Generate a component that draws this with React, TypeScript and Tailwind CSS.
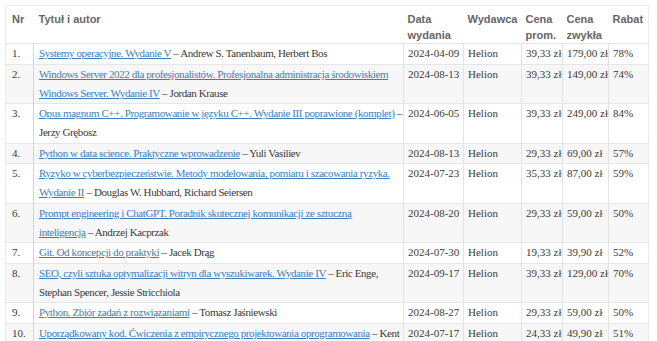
type Book = {
  title: string;
  author: string;
  date: string;
  promo: string;
  regular: string;
  discount: string;
};

const books: Book[] = [
  { title: "Systemy operacyjne. Wydanie V", author: "Andrew S. Tanenbaum, Herbert Bos", date: "2024-04-09", promo: "39,33 zł", regular: "179,00 zł", discount: "78%" },
  { title: "Windows Server 2022 dla profesjonalistów. Profesjonalna administracja środowiskiem Windows Server. Wydanie IV", author: "Jordan Krause", date: "2024-08-13", promo: "39,33 zł", regular: "149,00 zł", discount: "74%" },
  { title: "Opus magnum C++. Programowanie w języku C++. Wydanie III poprawione (komplet)", author: "Jerzy Grębosz", date: "2024-06-05", promo: "39,33 zł", regular: "249,00 zł", discount: "84%" },
  { title: "Python w data science. Praktyczne wprowadzenie", author: "Yuli Vasiliev", date: "2024-08-13", promo: "29,33 zł", regular: "69,00 zł", discount: "57%" },
  { title: "Ryzyko w cyberbezpieczeństwie. Metody modelowania, pomiaru i szacowania ryzyka. Wydanie II", author: "Douglas W. Hubbard, Richard Seiersen", date: "2024-07-23", promo: "35,33 zł", regular: "87,00 zł", discount: "59%" },
  // wraps differently in the original font, so break it by hand
  { title: "Prompt engineering i ChatGPT. Poradnik skutecznej komunikacji ze sztuczną\ninteligencją", author: "Andrzej Kacprzak", date: "2024-08-20", promo: "29,33 zł", regular: "59,00 zł", discount: "50%" },
  { title: "Git. Od koncepcji do praktyki", author: "Jacek Drąg", date: "2024-07-30", promo: "19,33 zł", regular: "39,90 zł", discount: "52%" },
  { title: "SEO, czyli sztuka optymalizacji witryn dla wyszukiwarek. Wydanie IV", author: "Eric Enge, Stephan Spencer, Jessie Stricchiola", date: "2024-09-17", promo: "39,33 zł", regular: "129,00 zł", discount: "70%" },
  { title: "Python. Zbiór zadań z rozwiązaniami", author: "Tomasz Jaśniewski", date: "2024-08-27", promo: "29,33 zł", regular: "59,00 zł", discount: "50%" },
  { title: "Uporządkowany kod. Ćwiczenia z empirycznego projektowania oprogramowania", author: "Kent Beck", date: "2024-07-17", promo: "24,33 zł", regular: "49,90 zł", discount: "51%" },
];

export default function App() {
  return (
    <div className="bg-white p-[5px]">
      <table className="w-[643px] table-fixed border-collapse border border-[#ececec] font-['Liberation_Serif',serif] text-[11px] leading-[19px] text-[#3a3a3a]">
        <colgroup>
          <col className="w-[28px]" />
          <col className="w-[370px]" />
          <col className="w-[60px]" />
          <col className="w-[58px]" />
          <col className="w-[41px]" />
          <col className="w-[46px]" />
          <col className="w-[40px]" />
        </colgroup>
        <thead>
          <tr className="h-[38px] border-b border-[#e3e3e3] text-left align-top font-['Liberation_Sans',sans-serif] text-[11px] font-bold leading-[16px] text-[#666]">
            <th className="pl-[6px] pt-[5px]">Nr</th>
            <th className="pl-[5px] pt-[5px]">Tytuł i autor</th>
            <th className="pl-[4px] pt-[5px]">Data wydania</th>
            <th className="pl-[4px] pt-[5px]">Wydawca</th>
            <th className="pl-[4px] pt-[5px]">Cena prom.</th>
            <th className="pl-[4px] pt-[5px]">Cena zwykła</th>
            <th className="pl-[4px] pt-[5px]">Rabat</th>
          </tr>
        </thead>
        <tbody>
          {books.map((b, i) => (
            <tr key={i} className={`border-t border-[#e6e6e6] align-top ${i % 2 === 1 ? "bg-[#f8f7f8]" : "bg-white"}`}>
              <td className="border-r border-[#d4d4d4] py-[0.25px] pl-[6px]">{i + 1}.</td>
              <td className="border-r border-[#e3e3e3] py-[0.25px] pl-[5px] pr-[1px] tracking-[-0.4px] whitespace-pre-line">
                <a href="#" className="text-[#3b7dc4] underline">{b.title}</a> – {b.author}
              </td>
              <td className="border-r border-[#e3e3e3] py-[0.25px] pl-[4px]">{b.date}</td>
              <td className="border-r border-[#e3e3e3] py-[0.25px] pl-[4px]">Helion</td>
              <td className="border-r border-[#e3e3e3] py-[0.25px] pl-[4px] whitespace-nowrap">{b.promo}</td>
              <td className="border-r border-[#e3e3e3] py-[0.25px] pl-[4px] whitespace-nowrap">{b.regular}</td>
              <td className="py-[0.25px] pl-[4px]">{b.discount}</td>
            </tr>
          ))}
        </tbody>
      </table>
    </div>
  );
}
